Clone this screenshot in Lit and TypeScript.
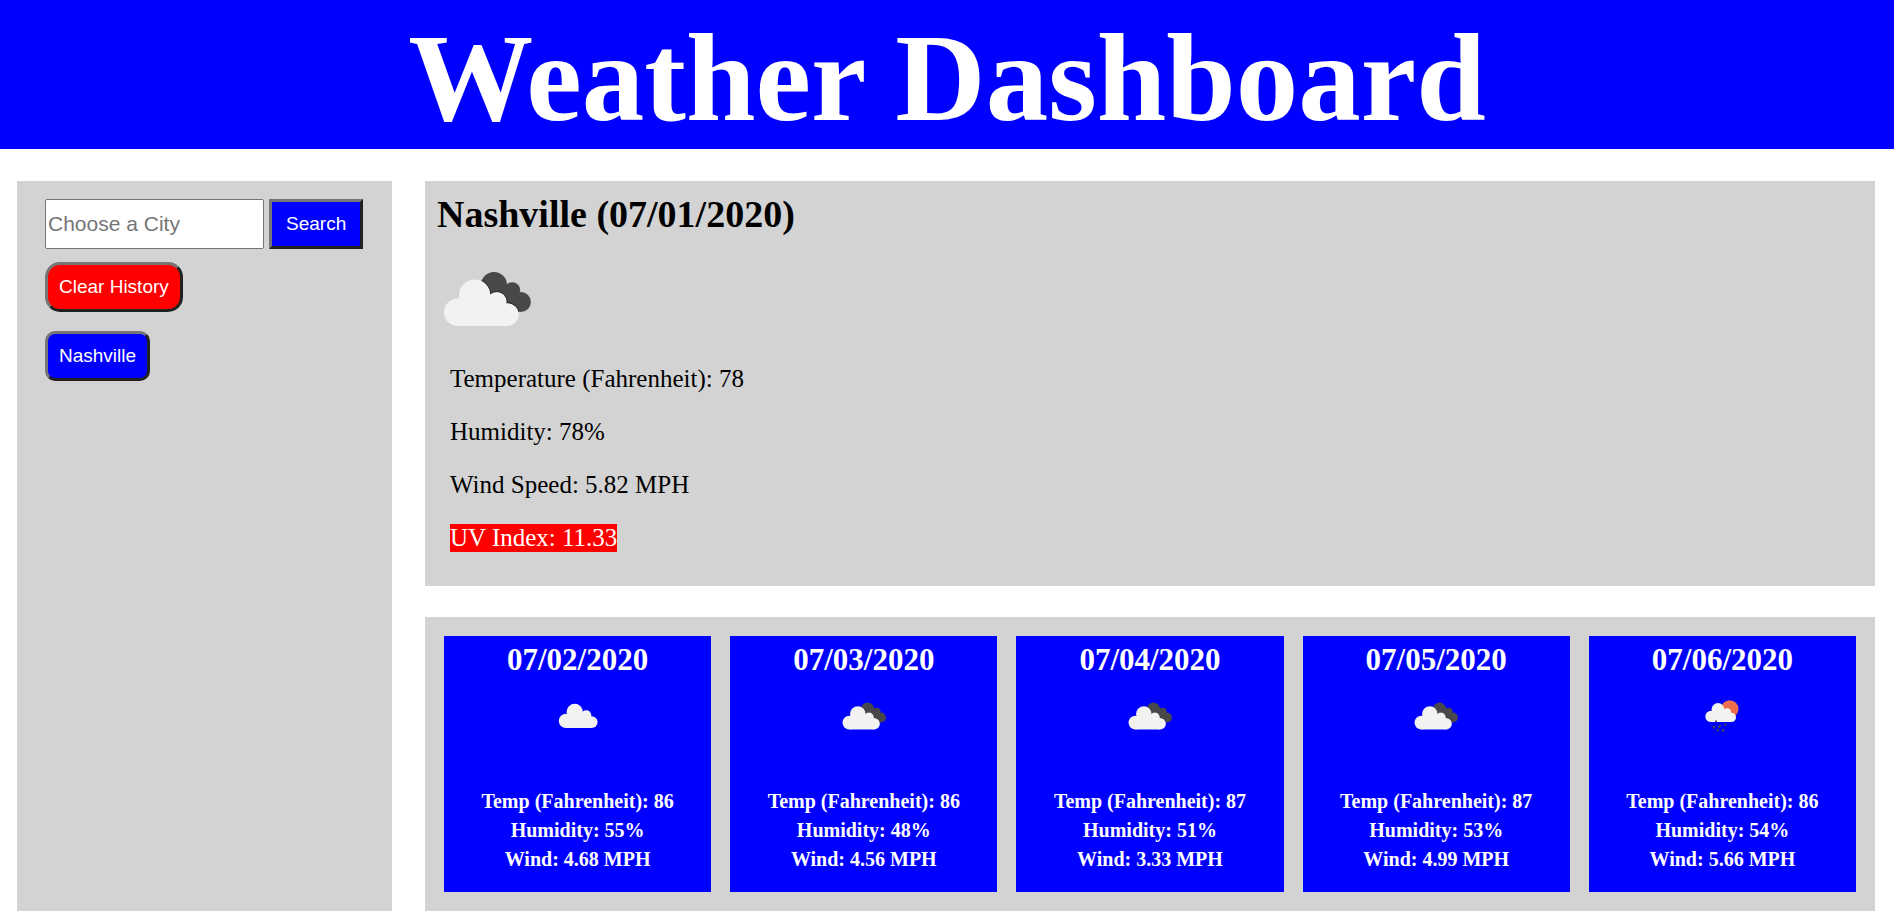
import { LitElement, html, svg, css } from "lit";
import { customElement, property } from "lit/decorators.js";

type Sky = "clouds" | "broken" | "rain";

interface Day {
  date: string;
  sky: Sky;
  temp: number;
  humidity: number;
  wind: string;
}

const DAYS: Day[] = [
  { date: "07/02/2020", sky: "clouds", temp: 86, humidity: 55, wind: "4.68" },
  { date: "07/03/2020", sky: "broken", temp: 86, humidity: 48, wind: "4.56" },
  { date: "07/04/2020", sky: "broken", temp: 87, humidity: 51, wind: "3.33" },
  { date: "07/05/2020", sky: "broken", temp: 87, humidity: 53, wind: "4.99" },
  { date: "07/06/2020", sky: "rain", temp: 86, humidity: 54, wind: "5.66" },
];

// The front cloud: four lobes over a flat base.
const cloud = () => svg`
  <circle cx="20.8" cy="63.2" r="13.8" />
  <circle cx="37.7" cy="46.1" r="15.6" />
  <circle cx="59.8" cy="52.8" r="9.8" />
  <circle cx="70.3" cy="65.6" r="11.4" />
  <path d="M20.8 77H70.3L70 58L60 50L37 44L22 52Z" />`;

// The rear cloud: three lobes, the lower part hidden by the front one.
const rearCloud = () => svg`
  <circle cx="57" cy="36" r="13" />
  <circle cx="75.3" cy="41.2" r="7.9" />
  <circle cx="84" cy="53" r="9.9" />
  <path d="M50 46L66 33L76 39L84 47L82 62.7L76 63L60 56Z" />`;

@customElement("weather-icon")
export class WeatherIcon extends LitElement {
  @property() sky: Sky = "clouds";

  static styles = css`
    :host {
      display: block;
    }
    svg {
      display: block;
      width: 100%;
      height: 100%;
    }
    .light {
      fill: #f2f2f0;
    }
    .dark {
      fill: #48484a;
    }
    .edge {
      fill: none;
      stroke: #2a2a2c;
      stroke-width: 2;
    }
    .sun {
      fill: #ec6e4c;
    }
    .drops {
      fill: none;
      stroke: #48484a;
      stroke-width: 4;
      stroke-linecap: round;
    }
  `;

  private shapes() {
    if (this.sky === "broken") {
      return svg`
        <clipPath id="behind">${rearCloud()}</clipPath>
        <g class="dark">${rearCloud()}</g>
        <g class="edge" clip-path="url(#behind)">${cloud()}</g>
        <g class="light">${cloud()}</g>`;
    }
    if (this.sky === "rain") {
      return svg`
        <circle class="sun" cx="65.5" cy="36" r="17.5" />
        <g class="light" transform="translate(11 -1) scale(0.82)">${cloud()}</g>
        <path class="drops" d="M38 60.5v.5M34.5 71l-1.500 2.500M46 69.500l-1.500 2.500M57 66.500l-.5 1M41.500 78l-.5 1M52.500 77.500l-1 2" />`;
    }
    return svg`<g class="light" transform="translate(4.3 -6) scale(1.04)">${cloud()}</g>`;
  }

  render() {
    return html`<svg viewBox="0 0 100 100" aria-hidden="true">${this.shapes()}</svg>`;
  }
}

@customElement("app-root")
export class AppRoot extends LitElement {
  static styles = css`
    :host {
      display: block;
      font-family: "Liberation Serif", "Times New Roman", serif;
      color: #000;
      background: #fff;
    }
    * {
      box-sizing: border-box;
    }
    h1,
    h2,
    h3,
    p {
      margin: 0;
    }
    .header {
      padding-top: 7px;
      background: blue;
      color: white;
      text-align: center;
    }
    .title {
      font-size: 125px;
      line-height: 142px;
    }
    .layout {
      display: grid;
      grid-template-columns: 15fr 58fr;
      gap: 33px;
      padding: 32px 19px 5px 17px;
    }
    .panel {
      background: lightgray;
    }
    .side {
      display: flex;
      flex-direction: column;
      align-items: flex-start;
      padding: 18px 28px;
    }
    .search {
      display: flex;
      align-items: center;
      gap: 5px;
      width: 100%;
    }
    .city {
      flex: 0 1 219px;
      min-width: 0;
      height: 50px;
      padding: 1px 2px;
      border: 1px solid #767676;
      border-radius: 2px;
      background: white;
      font: 21px "Liberation Sans", Arial, sans-serif;
    }
    .city::placeholder {
      color: #757575;
    }
    .btn {
      height: 50px;
      padding: 0 11px;
      border: 3px solid;
      border-color: #767676 #212121 #212121 #767676;
      color: white;
      background: blue;
      font: 19px "Liberation Sans", Arial, sans-serif;
      white-space: nowrap;
    }
    .go {
      padding: 0 14px;
    }
    .clear {
      margin-top: 13px;
      border-radius: 15px;
      background: red;
    }
    .past {
      margin-top: 19px;
      border-radius: 10px;
    }
    .main {
      display: flex;
      flex-direction: column;
      gap: 31px;
      min-width: 0;
    }
    .current {
      padding: 12px 12px 34px;
    }
    .place {
      font-size: 38px;
      line-height: 42px;
    }
    .now-icon {
      width: 100px;
      height: 100px;
      margin-top: 14px;
    }
    .facts {
      display: flex;
      flex-direction: column;
      align-items: flex-start;
      gap: 25px;
      margin-top: 16px;
      padding-left: 13px;
      font-size: 25px;
      line-height: 28px;
    }
    .uv {
      background: red;
      color: white;
    }
    .forecast {
      display: grid;
      grid-template-columns: repeat(5, 1fr);
      gap: 19px;
      padding: 19px;
    }
    .day {
      padding: 6px 0 18px;
      background: blue;
      color: white;
      text-align: center;
      font-weight: bold;
    }
    .date {
      font-size: 31px;
      line-height: 36px;
    }
    .day-icon {
      width: 50px;
      height: 50px;
      margin: 13px auto 46px;
    }
    .fact {
      font-size: 20px;
      line-height: 29px;
    }
  `;

  render() {
    return html`
      <header class="header"><h1 class="title">Weather Dashboard</h1></header>
      <div class="layout">
        <aside class="panel side">
          <form class="search" @submit=${(e: Event) => e.preventDefault()}>
            <input class="city" type="text" placeholder="Choose a City" aria-label="Choose a City" />
            <button class="btn go" type="submit">Search</button>
          </form>
          <button class="btn clear" type="button">Clear History</button>
          <button class="btn past" type="button">Nashville</button>
        </aside>
        <main class="main">
          <section class="panel current">
            <h2 class="place">Nashville (07/01/2020)</h2>
            <weather-icon class="now-icon" sky="broken"></weather-icon>
            <div class="facts">
              <p>Temperature (Fahrenheit): 78</p>
              <p>Humidity: 78%</p>
              <p>Wind Speed: 5.82 MPH</p>
              <p class="uv">UV Index: 11.33</p>
            </div>
          </section>
          <section class="panel forecast">
            ${DAYS.map(
              (d) => html`
                <article class="day">
                  <h3 class="date">${d.date}</h3>
                  <weather-icon class="day-icon" sky=${d.sky}></weather-icon>
                  <p class="fact">Temp (Fahrenheit): ${d.temp}</p>
                  <p class="fact">Humidity: ${d.humidity}%</p>
                  <p class="fact">Wind: ${d.wind} MPH</p>
                </article>
              `
            )}
          </section>
        </main>
      </div>
    `;
  }
}
